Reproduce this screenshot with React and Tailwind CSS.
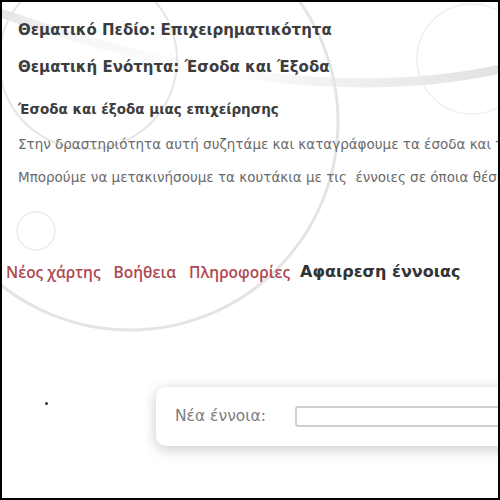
import React from 'react';

const sans = { fontFamily: '"Liberation Sans", Arial, sans-serif' };
const wide = { fontFamily: '"DejaVu Sans", Verdana, sans-serif' };
const open = { fontFamily: '"Open Sans", "DejaVu Sans", sans-serif' };

function Backdrop() {
    return (
        <svg className="pointer-events-none absolute inset-0" width="500" height="500" viewBox="0 0 500 500" fill="none">
            <defs>
                <linearGradient id="band" x1="0" y1="0" x2="500" y2="0" gradientUnits="userSpaceOnUse">
                    <stop offset="0" stopColor="#e2e2e2" stopOpacity="0.9" />
                    <stop offset="0.15" stopColor="#e2e2e2" stopOpacity="0.3" />
                    <stop offset="0.45" stopColor="#e2e2e2" stopOpacity="0" />
                    <stop offset="0.6" stopColor="#e2e2e2" stopOpacity="0.4" />
                    <stop offset="1" stopColor="#e2e2e2" stopOpacity="1" />
                </linearGradient>
            </defs>
            <path d="M -10 8 Q 300 118 520 62" stroke="url(#band)" strokeWidth="9" strokeLinecap="round" />
            <circle cx="128" cy="120" r="208" stroke="#e4e4e4" strokeWidth="3" />
            <circle cx="86" cy="58" r="89" stroke="#e6e6e6" strokeWidth="2" />
            <circle cx="470" cy="57" r="55" stroke="#efefef" strokeWidth="1.5" />
            <circle cx="34" cy="229" r="19" stroke="#ececec" strokeWidth="1.5" />
        </svg>
    );
}

export default function App() {
    return (
        <div className="relative h-[500px] w-[500px] overflow-hidden border-2 border-black bg-white" style={sans}>
            <Backdrop />
            <div className="relative flex flex-col">
                <div className="pl-4 pt-[18px]" style={wide}>
                    <h1 className="whitespace-nowrap text-[15px] font-bold leading-[20px] text-[#3d3d3d]">
                        Θεματικό Πεδίο: Επιχειρηματικότητα
                    </h1>
                    <h2 className="mt-[17px] whitespace-nowrap text-[15px] font-bold leading-[20px] text-[#3d3d3d]">
                        Θεματική Ενότητα: Έσοδα και Έξοδα
                    </h2>
                    <h3 className="mt-[22px] whitespace-nowrap text-[13.5px] font-bold leading-[20px] text-[#3d3d3d]">
                        Έσοδα και έξοδα μιας επιχείρησης
                    </h3>
                    <p className="mt-[15px] whitespace-nowrap text-[13.5px] leading-[20px] text-[#6a6a6a]">
                        Στην δραστηριότητα αυτή συζητάμε και καταγράφουμε τα έσοδα και τα έξοδα μιας επιχείρησης.
                    </p>
                    <p className="mt-[13px] whitespace-nowrap text-[13.5px] leading-[20px] text-[#6a6a6a]">
                        Μπορούμε να μετακινήσουμε τα κουτάκια με τις&nbsp; έννοιες σε όποια θέση θέλουμε.
                    </p>
                </div>

                <nav className="mt-[75px] flex items-center whitespace-nowrap pl-1 leading-[20px]">
                    <a className="text-[15.5px] font-semibold text-[#b04850]" style={open}>Νέος χάρτης</a>
                    <a className="ml-[13px] text-[15.5px] font-semibold text-[#b04850]" style={open}>Βοήθεια</a>
                    <a className="ml-[13px] text-[15.5px] font-semibold text-[#b04850]" style={open}>Πληροφορίες</a>
                    <a className="ml-[10px] text-[16px] font-bold text-[#333]" style={wide}>Αφαιρεση έννοιας</a>
                </nav>

                <div className="mt-[105px] flex items-start">
                    <span className="ml-[43px] mt-[15px] h-[3px] w-[3px] shrink-0 rounded-full bg-[#333]" />
                    <div className="ml-[108px] flex h-[59px] w-[420px] shrink-0 items-center rounded-[10px] bg-white pl-[19px] shadow-[0_3px_14px_rgba(0,0,0,0.22)]">
                        <label className="w-[120px] shrink-0 text-[15.5px] text-[#7d7d7d]" style={wide}>Νέα έννοια:</label>
                        <input
                            type="text"
                            className="h-[21px] w-[260px] shrink-0 rounded-[3px] border-2 border-[#cfcfcf] bg-white outline-none"
                        />
                    </div>
                </div>
            </div>
        </div>
    );
}
